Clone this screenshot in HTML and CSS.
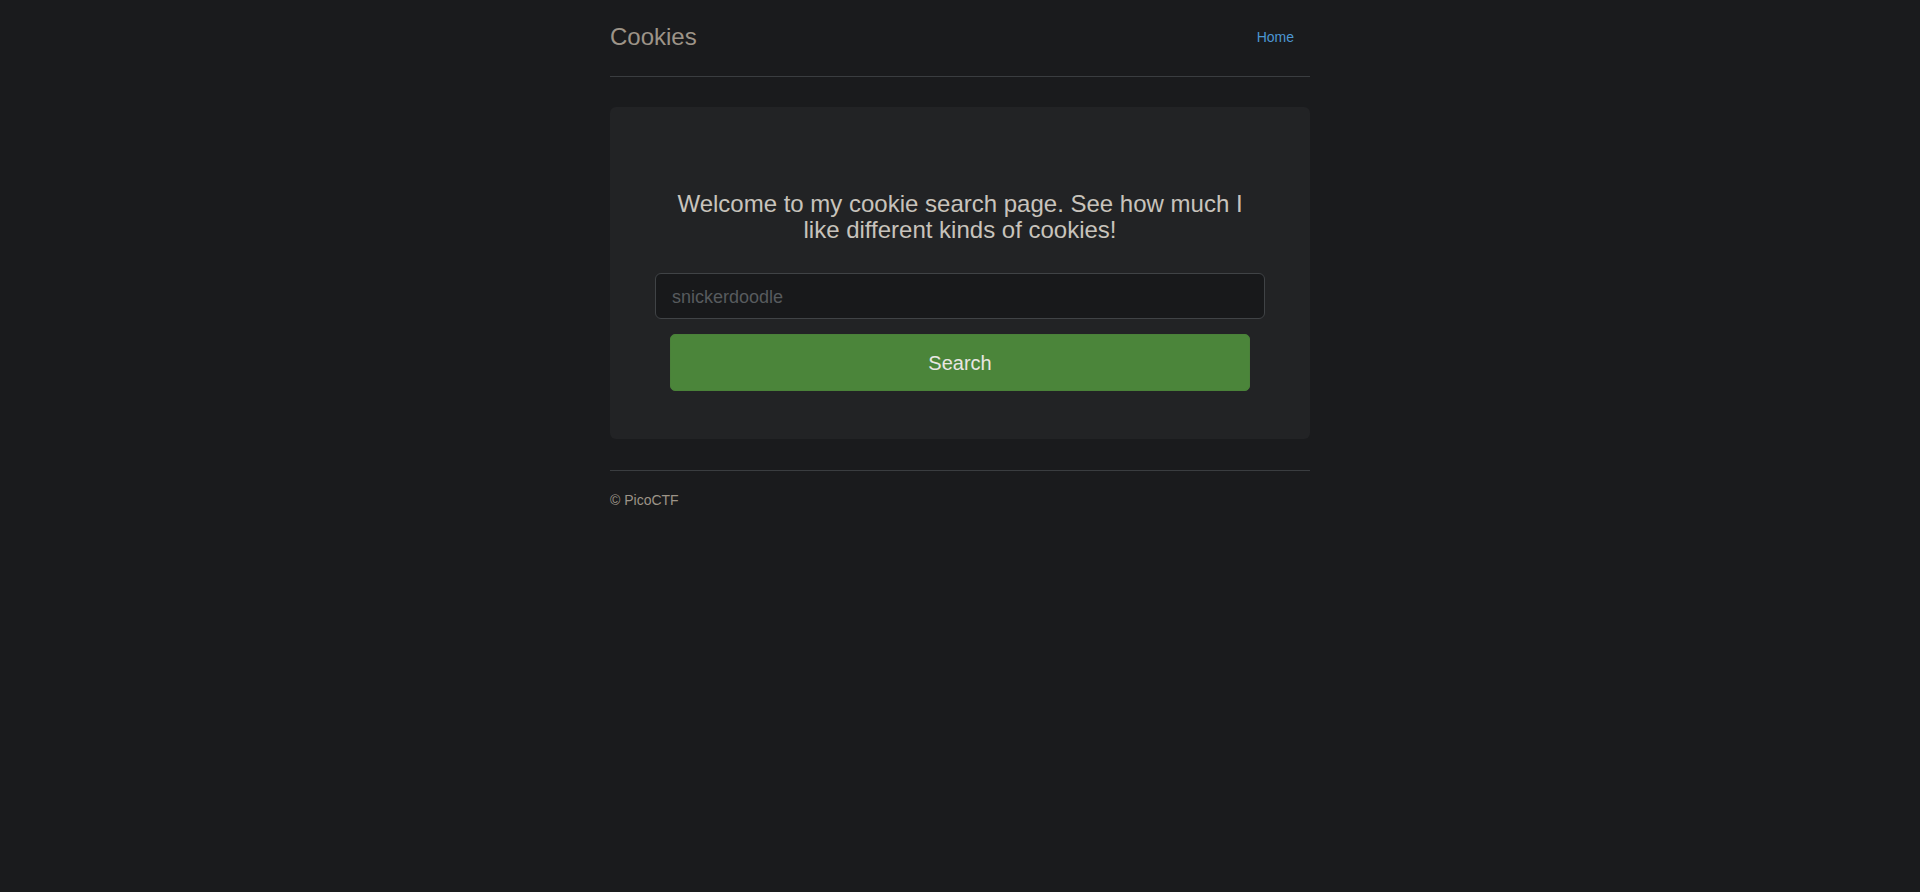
FILE: index.html
```html
<!DOCTYPE html>
<html lang="en">
<head>
<meta charset="utf-8">
<title>Cookies</title>
<link rel="stylesheet" href="styles.css">
</head>
<body>
<div class="container">
  <div class="header">
    <h3 class="title">Cookies</h3>
    <nav class="nav">
      <a href="#" class="nav-link">Home</a>
    </nav>
  </div>
  <div class="jumbotron">
    <h3 class="welcome">Welcome to my cookie search page. See how much I like different kinds of cookies!</h3>
    <form class="search-form">
      <input type="text" class="form-control" placeholder="snickerdoodle">
      <button type="button" class="btn-search">Search</button>
    </form>
  </div>
  <footer class="footer">
    <p>&copy; PicoCTF</p>
  </footer>
</div>
</body>
</html>
```

FILE: styles.css
```css
* { box-sizing: border-box; }
html, body {
  margin: 0;
  background: #1a1b1d;
}
body {
  padding-top: 17px;
  font-family: "Liberation Sans", Arial, sans-serif;
  font-size: 14px;
  line-height: 20px;
  color: #c8c3bc;
}
.container {
  width: 730px;
  margin: 0 auto;
  padding: 0 15px;
}
.header {
  display: flex;
  justify-content: space-between;
  align-items: flex-start;
  padding-bottom: 19px;
  border-bottom: 1px solid #3a3d40;
}
.title {
  margin: 0;
  font-size: 24px;
  line-height: 40px;
  font-weight: 400;
  color: #9d9488;
}
.nav {
  height: 40px;
}
.nav-link {
  display: block;
  margin-top: -1px;
  padding: 10px 15px;
  border: 1px solid transparent;
  font-size: 14px;
  line-height: 20px;
  color: #4c96d2;
  text-decoration: none;
}
.jumbotron {
  margin-top: 30px;
  padding: 48px 60px;
  background: #222325;
  border-radius: 6px;
  text-align: center;
}
.welcome {
  margin: 36px 0 0;
  font-size: 24px;
  line-height: 1.1;
  font-weight: 400;
  color: #c8c3bc;
}
.search-form {
  display: flex;
  flex-direction: column;
  margin: 29px -15px 0;
}
.form-control {
  display: block;
  width: 100%;
  height: 46px;
  padding: 12px 16px 8px;
  font-family: inherit;
  font-size: 18px;
  line-height: 24px;
  color: #c8c3bc;
  background: #18191b;
  border: 1px solid #404346;
  border-radius: 6px;
  outline: none;
}
.form-control::placeholder {
  color: #575b5e;
}
.btn-search {
  display: block;
  margin: 15px 15px 0;
  padding: 16px 16px 14px;
  font-family: inherit;
  font-size: 20px;
  line-height: 25px;
  color: #e8e6e3;
  background: #4b853a;
  border: 1px solid #4a8139;
  border-radius: 5px;
  cursor: pointer;
}
.footer {
  margin-top: 31px;
  padding-top: 19px;
  border-top: 1px solid #3a3d40;
  color: #9d9488;
}
.footer p {
  margin: 0 0 10px;
}
```
